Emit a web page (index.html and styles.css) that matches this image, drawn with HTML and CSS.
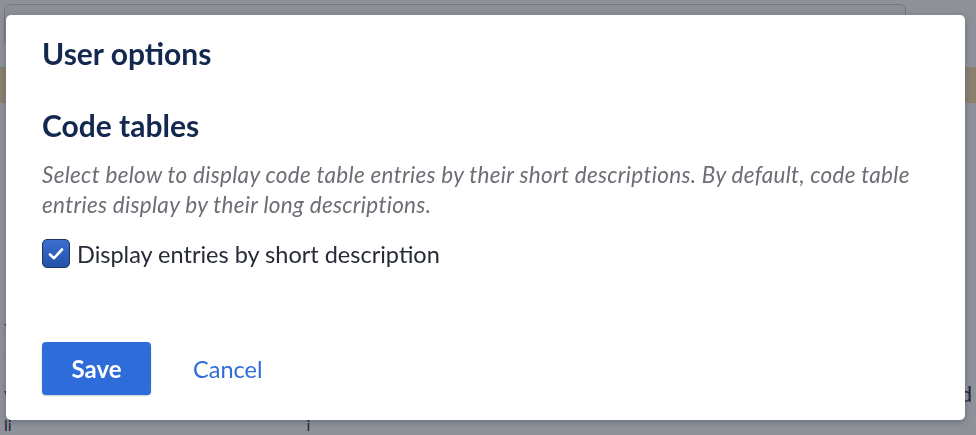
FILE: index.html
```html
<!DOCTYPE html>
<html lang="en">
<head>
    <meta charset="UTF-8">
    <meta name="viewport" content="width=device-width, initial-scale=1.0">
    <title>User options</title>
    <link rel="stylesheet" href="styles.css">
</head>
<body>
    <!-- page behind the dialog -->
    <div class="page">
        <div class="search-box"></div>
        <div class="notice"></div>
        <div class="page-body">
            <p class="page-line">f</p>
            <div class="page-row">
                <span>y</span>
                <span>d</span>
            </div>
            <p class="page-foot">li&nbsp;&nbsp;&nbsp;&nbsp;&nbsp;&nbsp;&nbsp;&nbsp;&nbsp;&nbsp;&nbsp;&nbsp;&nbsp;&nbsp;&nbsp;&nbsp;&nbsp;&nbsp;&nbsp;&nbsp;&nbsp;&nbsp;&nbsp;&nbsp;&nbsp;&nbsp;&nbsp;&nbsp;&nbsp;&nbsp;&nbsp;&nbsp;&nbsp;&nbsp;&nbsp;&nbsp;&nbsp;&nbsp;&nbsp;&nbsp;&nbsp;&nbsp;&nbsp;&nbsp;&nbsp;&nbsp;&nbsp;&nbsp;&nbsp;&nbsp;&nbsp;&nbsp;&nbsp;&nbsp;&nbsp;&nbsp;&nbsp;&nbsp;&nbsp;&nbsp;&nbsp;&nbsp;&nbsp;&nbsp;&nbsp;&nbsp;&nbsp;&nbsp;&nbsp;&nbsp;&nbsp;&nbsp;i</p>
        </div>
    </div>

    <div class="back-black">
        <div class="dialog">
            <h2 class="dialog-title">User options</h2>
            <h3 class="section-title">Code tables</h3>
            <p class="hint">Select below to display code table entries by their short descriptions. By default, code table entries display by their long descriptions.</p>
            <label class="check-row">
                <span class="check-box">
                    <svg width="20" height="20" viewBox="0 0 20 20">
                        <path d="M4 10.5 L8 14.2 L16 5.5" fill="none" stroke="#fff" stroke-width="2.6" stroke-linecap="round" stroke-linejoin="round"/>
                    </svg>
                </span>
                Display entries by short description
            </label>
            <div class="actions">
                <button class="btn-save">Save</button>
                <a class="btn-cancel">Cancel</a>
            </div>
        </div>
    </div>
</body>
</html>
```
FILE: styles.css
```css
body{
    margin: 0;
    font-family: Lato, "Noto Sans", sans-serif;
    background: #fff;
    height: 435px;
    overflow: hidden;
}

.page{
    padding: 4px 70px 0 4px;
}

.search-box{
    height: 40px;
    border: 1px solid #c9ccd2;
    border-radius: 6px;
    background: #fafbfc;
}

.notice{
    margin: 21px -70px 0 -4px;
    height: 36px;
    background: #f7dfb0;
}

.page-body{
    padding-top: 210px;
    color: #1c2a44;
    font-size: 22px;
}

.page-line{
    margin: 0;
    border-bottom: 1px solid #dcdfe3;
    height: 46px;
}

.page-row{
    display: flex;
    justify-content: space-between;
    margin-right: -66px;
    padding-top: 20px;
}

.page-foot{
    margin: 8px 0 0;
    font-size: 16px;
}

.back-black{
    position: fixed;
    top: 0;
    left: 0;
    width: 100%;
    height: 100%;
    background: rgba(30, 36, 48, 0.5);
}

.dialog{
    position: absolute;
    top: 15px;
    left: 6px;
    width: 959px;
    height: 405px;
    box-sizing: border-box;
    background: #fff;
    border-radius: 5px;
    box-shadow: 0 2px 6px rgba(40, 50, 80, 0.35);
    padding: 22px 36px 0 36px;
}

.dialog-title,
.section-title{
    margin: 0;
    color: #13284f;
    font-size: 30px;
    font-weight: 700;
    line-height: 32px;
}

.section-title{
    margin-top: 40px;
}

.hint{
    margin: 19px 0 0;
    max-width: 880px;
    color: #6c6e75;
    font-style: italic;
    font-size: 22.5px;
    letter-spacing: 0.3px;
    line-height: 30px;
}

.check-row{
    display: flex;
    align-items: center;
    gap: 7px;
    margin-top: 19px;
    color: #262b36;
    font-size: 23.5px;
}

.check-box{
    width: 28px;
    height: 29px;
    box-sizing: border-box;
    border: 1px solid #1c3566;
    border-radius: 5px;
    background: linear-gradient(#3b6ed0, #2452a8);
    display: flex;
    align-items: center;
    justify-content: center;
}

.actions{
    display: flex;
    align-items: center;
    gap: 42px;
    margin-top: 74px;
}

.btn-save{
    width: 109px;
    height: 53px;
    border: none;
    border-radius: 4px;
    background: #2d6cd9;
    color: #fff;
    font-family: inherit;
    font-size: 24px;
    font-weight: 700;
    box-shadow: 0 1px 2px rgba(0, 0, 0, 0.2);
}

.btn-cancel{
    color: #2d6cd9;
    font-size: 23.5px;
}
```
